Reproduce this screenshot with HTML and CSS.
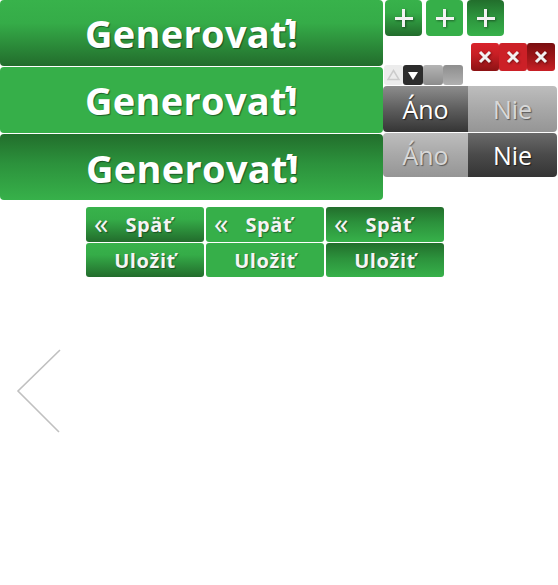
FILE: index.html
```html
<!DOCTYPE html>
<html lang="sk">
<head>
<meta charset="utf-8">
<title>Sprite</title>
<link rel="stylesheet" href="styles.css">
</head>
<body>
<div class="sheet">
  <div class="top">
    <div class="big-col">
      <div class="gen st-up">Generovať!</div>
      <div class="gen st-flat">Generovať!</div>
      <div class="gen st-down">Generovať!</div>
    </div>
    <div class="side">
      <div class="plus-row">
        <div class="plus st-up"><span class="plus-ic"></span></div>
        <div class="plus st-flat"><span class="plus-ic"></span></div>
        <div class="plus st-down"><span class="plus-ic"></span></div>
      </div>
      <div class="mid-row">
        <div class="arrows">
          <div class="arr arr-light"><svg width="19" height="20" viewBox="0 0 19 20"><polygon points="9.5,5.5 15,14.5 4,14.5" fill="none" stroke="#cccccc" stroke-width="1.5"/></svg></div>
          <div class="arr arr-dark"><svg width="20" height="20" viewBox="0 0 20 20"><polygon points="5,7 15,7 10,15" fill="#fff"/></svg></div>
          <div class="arr arr-g1"></div>
          <div class="arr arr-g2"></div>
        </div>
        <div class="xs">
          <div class="xb x-up"><svg class="x-ic" width="14" height="14" viewBox="0 0 14 14"><path d="M2 2 L12 12 M12 2 L2 12" stroke="#f2f2f2" stroke-width="3"/></svg></div>
          <div class="xb x-flat"><svg class="x-ic" width="14" height="14" viewBox="0 0 14 14"><path d="M2 2 L12 12 M12 2 L2 12" stroke="#f2f2f2" stroke-width="3"/></svg></div>
          <div class="xb x-down"><svg class="x-ic" width="14" height="14" viewBox="0 0 14 14"><path d="M2 2 L12 12 M12 2 L2 12" stroke="#f2f2f2" stroke-width="3"/></svg></div>
        </div>
      </div>
      <div class="toggle t1">
        <div class="opt ano on">Áno</div>
        <div class="opt nie off">Nie</div>
      </div>
      <div class="toggle t2">
        <div class="opt ano off">Áno</div>
        <div class="opt nie on">Nie</div>
      </div>
    </div>
  </div>
  <div class="small-grid">
    <div class="sb st-up back"><span class="gq">«</span>Späť</div>
    <div class="sb st-flat back"><span class="gq">«</span>Späť</div>
    <div class="sb st-down back"><span class="gq">«</span>Späť</div>
    <div class="sb st-up">Uložiť</div>
    <div class="sb st-flat">Uložiť</div>
    <div class="sb st-down">Uložiť</div>
  </div>
  <svg class="chevron" width="70" height="90" viewBox="0 0 70 90"><polyline points="60,1 18,42 59,83" fill="none" stroke="#c0c0c0" stroke-width="1.6"/></svg>
</div>
</body>
</html>
```
FILE: styles.css
```css
html, body {
  margin: 0;
  padding: 0;
  background: #fff;
}
.sheet {
  width: 558px;
  font-family: "Open Sans", "Liberation Sans", sans-serif;
}
.top {
  display: flex;
  align-items: flex-start;
}
.big-col {
  width: 383px;
  display: flex;
  flex-direction: column;
  gap: 1px;
}
.st-up {
  background: linear-gradient(to bottom, #38b24b 0%, #35ac48 35%, #226c2c 100%);
}
.st-flat {
  background: #36af49;
}
.st-down {
  background: linear-gradient(to bottom, #226e2c 0%, #2c923c 45%, #37b14a 100%);
}
.gen {
  height: 66px;
  border-radius: 4px;
  color: #fff;
  font-weight: 700;
  font-size: 38px;
  letter-spacing: 0.3px;
  display: flex;
  align-items: center;
  justify-content: center;
  text-shadow: 1px 1px 1px rgba(0,0,0,0.45);
}
.gen.st-down {
  padding-top: 2px;
  padding-left: 2px;
  box-sizing: border-box;
}
.side {
  width: 175px;
  display: flex;
  flex-direction: column;
}
.plus-row {
  display: flex;
  gap: 4px;
  margin-left: 2px;
}
.plus {
  width: 37px;
  height: 36px;
  border-radius: 4px;
  display: flex;
  align-items: center;
  justify-content: center;
}
.plus-ic {
  width: 18px;
  height: 18px;
  background:
    linear-gradient(#f2f2f2, #f2f2f2) center / 18px 3px no-repeat,
    linear-gradient(#f2f2f2, #f2f2f2) center / 3px 18px no-repeat;
  filter: drop-shadow(1px 1px 1px rgba(0,0,0,0.4));
}
.mid-row {
  display: flex;
  align-items: flex-start;
  margin-top: 7px;
}
.arrows {
  display: flex;
  margin-left: 1px;
  margin-top: 22px;
}
.arr {
  width: 20px;
  height: 20px;
  border-radius: 3px;
}
.arr svg { display: block; }
.arr-light { background: #ececec; width: 19px; }
.arr-dark { background: #2c2c2c; }
.arr-g1 { background: linear-gradient(to bottom, #b4b4b4, #8c8c8c); }
.arr-g2 { background: linear-gradient(to bottom, #8e8e8e, #b0b0b0); }
.xs {
  display: flex;
  margin-left: 8px;
}
.xb {
  width: 28px;
  height: 28px;
  border-radius: 3px;
  display: flex;
  align-items: center;
  justify-content: center;
}
.x-up { background: linear-gradient(to bottom, #d9232a 0%, #c81f25 40%, #8c1214 100%); }
.x-flat { background: #cc2027; }
.x-down { background: linear-gradient(to bottom, #7a0e0f 0%, #a01719 55%, #c81f25 100%); }
.x-ic {
  display: block;
  filter: drop-shadow(1px 1px 1px rgba(0,0,0,0.4));
}
.toggle {
  display: flex;
  margin-top: 1px;
}
.t1 { height: 46px; }
.t2 { height: 44px; }
.opt {
  display: flex;
  align-items: center;
  justify-content: center;
  font-size: 25px;
  font-weight: 400;
}
.ano { width: 85px; border-radius: 4px 0 0 4px; }
.nie { width: 89px; border-radius: 0 4px 4px 0; }
.on {
  background: linear-gradient(to bottom, #8d8d8d 0%, #5e5e5e 50%, #353535 100%);
  color: #fff;
  text-shadow: 1px 1px 1px rgba(0,0,0,0.6);
}
.off {
  background: linear-gradient(to bottom, #bdbdbd 0%, #a8a8a8 50%, #959595 100%);
  color: #d8d8d8;
  text-shadow: 1px 1px 1px rgba(0,0,0,0.45);
}
.t2 .on {
  background: linear-gradient(to bottom, #6a6a6a 0%, #4a4a4a 50%, #343434 100%);
}
.small-grid {
  display: grid;
  grid-template-columns: 118px 118px 118px;
  grid-template-rows: 35px 34px;
  column-gap: 2px;
  row-gap: 1px;
  margin-left: 86px;
  margin-top: 7px;
}
.sb {
  border-radius: 3px;
  color: #f4f4f4;
  font-weight: 700;
  font-size: 20px;
  letter-spacing: 0.6px;
  display: flex;
  align-items: center;
  justify-content: center;
  text-shadow: 1px 1px 1px rgba(0,0,0,0.4);
}
.sb.back {
  justify-content: flex-start;
  padding-left: 8px;
}
.gq {
  font-weight: 400;
  font-size: 29px;
  margin-right: 17px;
  line-height: 1;
  position: relative;
  top: -2px;
  letter-spacing: 0;
}
.chevron {
  display: block;
  margin-top: 72px;
}
```
